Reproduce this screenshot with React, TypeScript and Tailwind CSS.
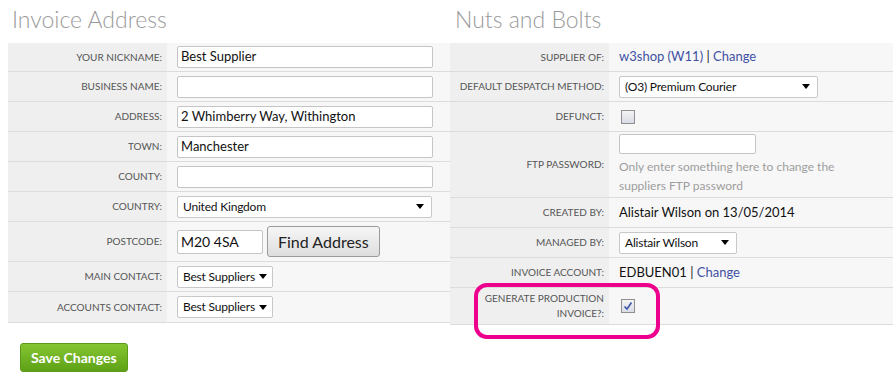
import React from "react";

const font = { fontFamily: "Lato, 'Open Sans', sans-serif" };

function Caret() {
  return (
    <span className="ml-auto inline-block h-0 w-0 shrink-0 border-x-[4px] border-t-[5px] border-x-transparent border-t-black" />
  );
}

function FakeSelect({ value, width }: { value: string; width: string }) {
  return (
    <div
      className={`flex h-[22px] items-center gap-[4px] whitespace-nowrap rounded-[2px] border border-[#c8c8c8] bg-white pl-[5px] pr-[7px] text-[12px] tracking-[-0.2px] text-[#111] ${width}`}
    >
      <span>{value}</span>
      <Caret />
    </div>
  );
}

function TextBox({ value, width }: { value?: string; width: string }) {
  return (
    <div
      className={`flex h-[22px] items-center rounded-[2px] border border-[#c5c5c5] bg-white px-[3px] text-[13px] text-[#111] ${width}`}
    >
      {value}
    </div>
  );
}

function Row({
  label,
  children,
  h = "h-[30px]",
  last = false,
}: {
  label: React.ReactNode;
  children?: React.ReactNode;
  h?: string;
  last?: boolean;
}) {
  return (
    <div className={`flex ${h} ${last ? "" : "border-b border-[#dcdcdc]"}`}>
      <div className="flex w-[159px] shrink-0 items-center justify-end bg-[#efefef] pr-[5px] text-right text-[10px] uppercase leading-[15px] text-[#555]">
        {label}
      </div>
      <div className="flex flex-1 items-center bg-[#f7f7f7] pl-[10px]">
        {children}
      </div>
    </div>
  );
}

function Checkbox({ checked = false }: { checked?: boolean }) {
  return (
    <div className="flex h-[14px] w-[14px] items-center justify-center border border-[#8f8f8f] bg-gradient-to-b from-[#f4f4f4] to-[#d8dce6]">
      {checked && (
        <svg width="10" height="10" viewBox="0 0 10 10">
          <path d="M1.5 5.5 L4 8 L8.5 1.5" fill="none" stroke="#3b56a8" strokeWidth="1.6" />
        </svg>
      )}
    </div>
  );
}

const link = "text-[#3f51a3]";

export default function App() {
  return (
    <div style={font} className="relative h-[380px] w-[896px] overflow-hidden bg-white">
      <div className="flex pl-[8px]">
        <div className="w-[442px]">
          <h2 className="h-[43px] pl-[4px] pt-[4px] text-[23px] font-light leading-[30px] text-[#9a9a9a]">
            Invoice Address
          </h2>
          <div className="border-b border-[#dcdcdc]">
            <Row label="Your Nickname:" h="h-[29px]">
              <TextBox value="Best Supplier" width="w-[256px]" />
            </Row>
            <Row label="Business Name:">
              <TextBox width="w-[256px]" />
            </Row>
            <Row label="Address:">
              <TextBox value="2 Whimberry Way, Withington" width="w-[256px]" />
            </Row>
            <Row label="Town:">
              <TextBox value="Manchester" width="w-[256px]" />
            </Row>
            <Row label="County:">
              <TextBox width="w-[256px]" />
            </Row>
            <Row label="Country:">
              <FakeSelect value="United Kingdom" width="w-[255px]" />
            </Row>
            <Row label="Postcode:" h="h-[40px]">
              <div className="flex items-center gap-[4px]">
                <div className="flex h-[24px] w-[86px] items-center rounded-[2px] border border-[#c5c5c5] bg-white px-[3px] text-[14px] text-[#111]">
                  M20 4SA
                </div>
                <button className="h-[31px] rounded-[3px] border border-[#9a9a9a] bg-gradient-to-b from-[#f6f6f6] to-[#dedede] px-[10px] text-[16px] text-[#222]">
                  Find Address
                </button>
              </div>
            </Row>
            <Row label="Main Contact:">
              <FakeSelect value="Best Suppliers" width="w-[96px]" />
            </Row>
            <Row label="Accounts Contact:" last>
              <FakeSelect value="Best Suppliers" width="w-[96px]" />
            </Row>
          </div>
          <button className="ml-[12px] mt-[20px] h-[29px] rounded-[3px] border border-[#5c9a1a] bg-gradient-to-b from-[#84c631] to-[#5fa116] px-[10px] text-[14px] font-bold text-white">
            Save Changes
          </button>
        </div>

        <div className="w-[443px]">
          <h2 className="h-[43px] pl-[5px] pt-[4px] text-[23px] font-light leading-[30px] text-[#9a9a9a]">
            Nuts and Bolts
          </h2>
          <div className="border-b border-[#dcdcdc]">
            <Row label="Supplier of:" h="h-[29px]">
              <span className="text-[13px]">
                <span className={link}>w3shop (W11)</span>
                <span className="text-[#222]"> | </span>
                <span className={link}>Change</span>
              </span>
            </Row>
            <Row label="Default Despatch Method:">
              <FakeSelect value="(O3) Premium Courier" width="w-[199px]" />
            </Row>
            <Row label="Defunct:">
              <div className="pl-[2px]">
                <Checkbox />
              </div>
            </Row>
            <Row label="FTP Password:" h="h-[66px]">
              <div className="flex flex-col">
                <div className="h-[20px] w-[137px] rounded-[2px] border border-[#c5c5c5] bg-white" />
                <p className="mt-[3px] text-[12px] leading-[19px] text-[#9d9d9d]">
                  Only enter something here to change the
                  <br />
                  suppliers FTP password
                </p>
              </div>
            </Row>
            <Row label="Created by:">
              <span className="text-[13px] text-[#111]">Alistair Wilson on 13/05/2014</span>
            </Row>
            <Row label="Managed by:">
              <FakeSelect value="Alistair Wilson" width="w-[118px]" />
            </Row>
            <Row label="Invoice Account:">
              <span className="text-[13px] text-[#111]">
                EDBUEN01 <span className="text-[#222]">|</span>{" "}
                <span className={link}>Change</span>
              </span>
            </Row>
            <Row
              label={
                <span>
                  Generate Production
                  <br />
                  Invoice?:
                </span>
              }
              h="h-[36px]"
              last
            >
              <div className="pl-[2px]">
                <Checkbox checked />
              </div>
            </Row>
          </div>
        </div>
      </div>

      <div className="pointer-events-none absolute left-[474px] top-[283px] h-[56px] w-[186px] rounded-[13px] border-[4px] border-[#ec008c]" />
    </div>
  );
}
